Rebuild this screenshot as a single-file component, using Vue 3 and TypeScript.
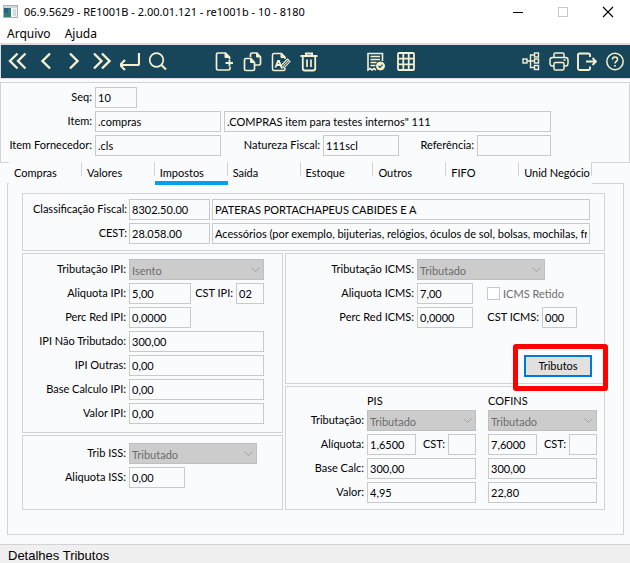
<script setup lang="ts">
import { ref } from 'vue'

interface Field {
  id: string
  label: string
  value: string
  size: string
}

const menus = ['Arquivo', 'Ajuda']
const tabs = ['Compras', 'Valores', 'Impostos', 'Saída', 'Estoque', 'Outros', 'FIFO', 'Unid Negócio']
const activeTab = ref('Impostos')

const classification = ref([
  { id: 'fiscal', label: 'Classificação Fiscal:', code: '8302.50.00', text: 'PATERAS PORTACHAPEUS CABIDES E A' },
  {
    id: 'cest',
    label: 'CEST:',
    code: '28.058.00',
    text: 'Acessórios (por exemplo, bijuterias, relógios, óculos de sol, bolsas, mochilas, frasqueiras)',
  },
])

const ipiFields = ref<Field[]>([
  { id: 'ipi-red', label: 'Perc Red IPI:', value: '0,0000', size: 'w-62' },
  { id: 'ipi-nt', label: 'IPI Não Tributado:', value: '300,00', size: 'w-135' },
  { id: 'ipi-outras', label: 'IPI Outras:', value: '0,00', size: 'w-135' },
  { id: 'ipi-base', label: 'Base Calculo IPI:', value: '0,00', size: 'w-135' },
  { id: 'ipi-valor', label: 'Valor IPI:', value: '0,00', size: 'w-135' },
])

const contributions = ref([
  { id: 'pis', name: 'PIS', type: 'Tributado', rate: '1,6500', cst: '', base: '300,00', value: '4,95' },
  { id: 'cofins', name: 'COFINS', type: 'Tributado', rate: '7,6000', cst: '', base: '300,00', value: '22,80' },
])

const seq = ref('10')
const item = ref('.compras')
const itemName = ref('.COMPRAS item para testes internos" 111')
const supplierItem = ref('.cls')
const nature = ref('111scl')
const reference = ref('')
const ipiRate = ref('5,00')
const ipiCst = ref('02')
const issRate = ref('0,00')
const icmsRate = ref('7,00')
const icmsRed = ref('0,0000')
const icmsCst = ref('000')
const icmsHeld = ref(false)
</script>

<template>
  <div class="window">
    <header class="titlebar">
      <svg class="app-icon" viewBox="0 0 15 13">
        <rect x="0.5" y="0.5" width="14" height="12" fill="#f4f4f4" stroke="#a9b0b6" />
        <rect x="1" y="1" width="13" height="2" fill="#cfd5da" />
        <rect x="1" y="3" width="7" height="9" fill="#2f7f74" />
        <rect x="1" y="3" width="4" height="5" fill="#2b5c8c" />
        <rect x="10" y="4" width="3" height="7" fill="#d6dade" />
      </svg>
      <h1>06.9.5629 - RE1001B - 2.00.01.121 - re1001b - 10 - 8180</h1>
      <div class="window-buttons">
        <button type="button" aria-label="Minimizar">
          <svg viewBox="0 0 12 12"><path d="M1 6.5h10" stroke="#000" /></svg>
        </button>
        <button type="button" aria-label="Maximizar" disabled>
          <svg viewBox="0 0 12 12"><rect x="1.5" y="1.5" width="9" height="9" fill="none" stroke="#c8c8c8" /></svg>
        </button>
        <button type="button" aria-label="Fechar">
          <svg viewBox="0 0 12 12"><path d="M1 1l10 10M11 1L1 11" stroke="#000" stroke-width="1.1" /></svg>
        </button>
      </div>
    </header>

    <nav class="menubar">
      <button v-for="menu in menus" :key="menu" type="button">{{ menu }}</button>
    </nav>

    <div class="toolbar">
      <div class="tools nav-tools">
        <button type="button" aria-label="Primeiro">
          <svg viewBox="0 0 20 20" stroke-width="2.4"><path d="M9.500 1.500L2 9L9.500 16.500M17.500 1.500L10 9L17.500 16.500" /></svg>
        </button>
        <button type="button" aria-label="Anterior">
          <svg viewBox="0 0 20 20" stroke-width="2.4"><path d="M14 1.500L6.500 9L14 16.500" /></svg>
        </button>
        <button type="button" aria-label="Próximo">
          <svg viewBox="0 0 20 20" stroke-width="2.4"><path d="M6 1.500L13.500 9L6 16.500" /></svg>
        </button>
        <button type="button" aria-label="Último">
          <svg viewBox="0 0 20 20" stroke-width="2.4"><path d="M2 1.500L9.500 9L2 16.500M10 1.500L17.500 9L10 16.500" /></svg>
        </button>
        <button type="button" aria-label="Vai para">
          <svg viewBox="0 0 20 20" stroke-width="2.2"><path d="M19 1V11.500q0 1.500-1.500 1.500H0M5 8L0 13L5 18" /></svg>
        </button>
        <button type="button" aria-label="Pesquisar">
          <svg viewBox="0 0 20 20" stroke-width="1.700"><circle cx="8.500" cy="8" r="6.800" /><path d="M13.200 12.700L18 17.500" stroke-width="2" /></svg>
        </button>
      </div>
      <div class="tools edit-tools">
        <button type="button" aria-label="Incluir">
          <svg viewBox="0 0 20 20" stroke-width="1.700">
            <path d="M15 15v1.500q0 1.500-1.500 1.500H3q-1.500 0-1.500-1.500V2.500Q1.500 1 3 1h7.500l4 4V7" />
            <path d="M10 1V5.500h4.500z" fill="currentColor" stroke-width="1" />
            <path d="M10.500 11h7.500M14.500 7.500v7" stroke-width="1.800" />
          </svg>
        </button>
        <button type="button" aria-label="Copiar">
          <svg viewBox="0 0 20 20" stroke-width="1.700">
            <path d="M7.500 5V2.500Q7.500 1 9 1h5l3.500 4v6.500q0 1.500-1.500 1.500h-4" />
            <path d="M13.500 1V5h4z" fill="currentColor" stroke-width="1" />
            <path d="M3 6.500h5l3.500 4v6.500q0 1.500-1.500 1.500H3q-1.500 0-1.500-1.500V8q0-1.500 1.500-1.500z" />
            <path d="M7.500 6.500V10.500h4z" fill="currentColor" stroke-width="1" />
          </svg>
        </button>
        <button type="button" aria-label="Alterar">
          <svg viewBox="0 0 20 20" stroke-width="1.500">
            <path d="M14 16v1q0 1.500-1.500 1.500H3q-1.500 0-1.500-1.500V3q0-1.500 1.500-1.500h7.500l3.500 3.500v2" />
            <path d="M10 1.500V5.500h4z" fill="currentColor" stroke-width="1" />
            <path d="M4.500 15.500L7 9h1l2.500 6.500M5.500 13h4" stroke-width="1.800" />
            <path d="M16.500 7L10.500 13v3l3-.5L19 9.500zM11.500 15L17.500 8.500" stroke-width="1.100" />
          </svg>
        </button>
        <button type="button" aria-label="Eliminar">
          <svg viewBox="0 0 20 20" stroke-width="1.800">
            <path d="M1.500 4h17M7 3.500V1.500h6v2" stroke-width="2" />
            <path d="M3.800 4.500v12q0 2 2 2h8.400q2 0 2-2V4.500" />
            <path d="M8 7.500v7.500M12 7.500v7.500" stroke-width="1.700" />
          </svg>
        </button>
      </div>
      <div class="tools doc-tools">
        <button type="button" aria-label="Relatório">
          <svg viewBox="0 0 20 20" stroke-width="1.600">
            <path d="M16.500 9V1.500H2V18l2-1.500 2 1.500 2-1.500 2 1.500" />
            <path d="M4.500 4.500h9.500M4.500 7.500h9.500M4.500 10.500h6M4.500 13.500h5" />
            <circle cx="14.500" cy="14" r="4" fill="currentColor" stroke-width="1" />
            <path d="M12.500 14l1.500 1.500L16.500 12.700" stroke="#17465a" stroke-width="1.200" />
          </svg>
        </button>
        <button type="button" aria-label="Tabela">
          <svg viewBox="0 0 20 20" stroke-width="1.800">
            <rect x="2" y="1" width="16" height="17" rx="1" />
            <path d="M2 6.700h16M2 12.300h16M7.300 1v17M12.700 1v17" />
          </svg>
        </button>
      </div>
      <div class="tools help-tools">
        <button type="button" aria-label="Estrutura">
          <svg viewBox="0 0 20 20" stroke-width="1.400">
            <rect x="2" y="7" width="4" height="4" />
            <rect x="13.500" y="1" width="4" height="4" />
            <rect x="13.500" y="7" width="4" height="4" />
            <rect x="13.500" y="13.500" width="4" height="4" />
            <path d="M6 9h7.500M13.500 3H9.500v12.500h4" />
          </svg>
        </button>
        <button type="button" aria-label="Imprimir">
          <svg viewBox="0 0 20 20" stroke-width="1.500">
            <path d="M5 5.500V2.500Q5 1 6.500 1h7Q15 1 15 2.500v3" />
            <path d="M5 14H3q-2-.5-2-2.500V8Q1 5.500 3.500 5.500h13Q19 5.500 19 8v3.500q0 2-2 2.500h-2" />
            <rect x="5" y="10.500" width="10" height="7.500" rx="1.500" />
            <path d="M14.500 8h2" />
          </svg>
        </button>
        <button type="button" aria-label="Sair">
          <svg viewBox="0 0 20 20" stroke-width="1.900">
            <path d="M13 5V3q0-1.500-1.500-1.500h-9Q1 1.500 1 3v13.500q0 1.500 1.500 1.500h9q1.500 0 1.500-1.500v-2" />
            <path d="M9 9.500h10M15.500 6L19 9.500l-3.500 3.500" />
          </svg>
        </button>
        <button type="button" aria-label="Ajuda">
          <svg viewBox="0 0 20 20" stroke-width="1.500">
            <circle cx="10" cy="9.500" r="8.200" />
            <path d="M7.500 7.500q0-2.500 2.500-2.500T12.500 7.500q0 1.200-1.300 2T10 11.500" />
            <path d="M10 13v1.500" stroke-width="1.800" />
          </svg>
        </button>
      </div>
    </div>

    <form class="body" @submit.prevent>
      <section class="panel summary">
        <div class="row">
          <label for="seq" class="lead-summary">Seq:</label>
          <input id="seq" v-model="seq" class="w-42" readonly />
        </div>
        <div class="row">
          <label for="item" class="lead-summary">Item:</label>
          <input id="item" v-model="item" class="w-126" readonly />
          <input v-model="itemName" class="grow" aria-label="Descrição do item" readonly />
        </div>
        <div class="row">
          <label for="supplier" class="lead-summary">Item Fornecedor:</label>
          <input id="supplier" v-model="supplierItem" class="w-126" readonly />
          <label for="nature" class="lead-nature">Natureza Fiscal:</label>
          <input id="nature" v-model="nature" class="w-76" readonly />
          <label for="reference" class="push">Referência:</label>
          <input id="reference" v-model="reference" class="w-74" readonly />
        </div>
      </section>

      <div class="tabs" role="tablist">
        <button
          v-for="tab in tabs"
          :key="tab"
          type="button"
          role="tab"
          :aria-selected="tab === activeTab"
          :class="{ active: tab === activeTab }"
          @click="activeTab = tab"
        >
          {{ tab }}
        </button>
      </div>

      <section class="page">
        <div class="panel classification">
          <div v-for="line in classification" :key="line.id" class="row tight">
            <label :for="line.id" class="lead">{{ line.label }}</label>
            <input :id="line.id" v-model="line.code" class="w-81" readonly />
            <input v-model="line.text" class="grow" :aria-label="line.label + ' descrição'" readonly />
          </div>
        </div>

        <div class="columns">
          <div class="column">
            <div class="panel ipi">
              <div class="row">
                <label for="ipi-type" class="lead">Tributação IPI:</label>
                <span class="select w-135">
                  <select id="ipi-type" disabled><option>Isento</option></select>
                  <svg viewBox="0 0 9 5"><path d="M0.500 0.500l4 4 4-4" /></svg>
                </span>
              </div>
              <div class="row">
                <label for="ipi-rate" class="lead">Aliquota IPI:</label>
                <input id="ipi-rate" v-model="ipiRate" class="w-62" readonly />
                <label for="ipi-cst" class="lead-ipi-cst">CST IPI:</label>
                <input id="ipi-cst" v-model="ipiCst" class="w-28" readonly />
              </div>
              <div v-for="field in ipiFields" :key="field.id" class="row">
                <label :for="field.id" class="lead">{{ field.label }}</label>
                <input :id="field.id" v-model="field.value" :class="field.size" readonly />
              </div>
            </div>

            <div class="panel iss">
              <div class="row">
                <label for="iss-type" class="lead">Trib ISS:</label>
                <span class="select w-128">
                  <select id="iss-type" disabled><option>Tributado</option></select>
                  <svg viewBox="0 0 9 5"><path d="M0.500 0.500l4 4 4-4" /></svg>
                </span>
              </div>
              <div class="row">
                <label for="iss-rate" class="lead">Aliquota ISS:</label>
                <input id="iss-rate" v-model="issRate" class="w-56" readonly />
              </div>
            </div>
          </div>

          <div class="column">
            <div class="panel icms">
              <div class="row">
                <label for="icms-type" class="lead-icms">Tributação ICMS:</label>
                <span class="select w-128">
                  <select id="icms-type" disabled><option>Tributado</option></select>
                  <svg viewBox="0 0 9 5"><path d="M0.500 0.500l4 4 4-4" /></svg>
                </span>
              </div>
              <div class="row">
                <label for="icms-rate" class="lead-icms">Aliquota ICMS:</label>
                <input id="icms-rate" v-model="icmsRate" class="w-56" readonly />
                <label class="check"><input v-model="icmsHeld" type="checkbox" disabled />ICMS Retido</label>
              </div>
              <div class="row">
                <label for="icms-red" class="lead-icms">Perc Red ICMS:</label>
                <input id="icms-red" v-model="icmsRed" class="w-56" readonly />
                <label for="icms-cst" class="lead-cst">CST ICMS:</label>
                <input id="icms-cst" v-model="icmsCst" class="w-35" readonly />
              </div>
              <div class="action">
                <div class="highlight"><button type="button" class="primary">Tributos</button></div>
              </div>
            </div>

            <div class="panel contributions">
              <div class="contribution labels">
                <span></span>
                <span class="label">Tributação:</span>
                <span class="label">Alíquota:</span>
                <span class="label">Base Calc:</span>
                <span class="label">Valor:</span>
              </div>
              <div v-for="tax in contributions" :key="tax.id" class="contribution">
                <span class="heading">{{ tax.name }}</span>
                <span class="select">
                  <select :aria-label="tax.name + ' Tributação'" disabled><option>{{ tax.type }}</option></select>
                  <svg viewBox="0 0 9 5"><path d="M0.500 0.500l4 4 4-4" /></svg>
                </span>
                <div class="split">
                  <input v-model="tax.rate" class="w-49" :aria-label="tax.name + ' Alíquota'" readonly />
                  <label :for="tax.id + '-cst'">CST:</label>
                  <input :id="tax.id + '-cst'" v-model="tax.cst" class="w-28" readonly />
                </div>
                <input v-model="tax.base" :aria-label="tax.name + ' Base Calc'" readonly />
                <input v-model="tax.value" :aria-label="tax.name + ' Valor'" readonly />
              </div>
            </div>
          </div>
        </div>
      </section>
    </form>

    <footer class="status">Detalhes Tributos</footer>
  </div>
</template>

<style>
body {
  margin: 0;
}
</style>

<style scoped>
.window,
.window * {
  box-sizing: border-box;
}

.window {
  display: flex;
  flex-direction: column;
  min-height: 100vh;
  background: #fff;
  color: #000;
  font: 11px/21px Lato, 'Noto Sans', sans-serif;
}

button,
input,
select {
  margin: 0;
  font: inherit;
  color: inherit;
}

button {
  padding: 0;
  border: 0;
  background: none;
}

.titlebar {
  display: flex;
  align-items: center;
  height: 23px;
  padding-left: 3px;
}

.app-icon {
  width: 15px;
  height: 13px;
}

h1 {
  flex: 1;
  margin: 0 0 0 6px;
  font-family: 'Noto Sans', sans-serif;
  font-size: 11px;
  font-weight: 400;
  line-height: 22px;
  white-space: nowrap;
}

.window-buttons {
  display: flex;
}

.window-buttons button {
  display: grid;
  place-items: center;
  width: 45px;
  height: 22px;
}

.window-buttons svg {
  width: 12px;
  height: 12px;
}

.menubar {
  display: flex;
  gap: 14px;
  height: 20px;
  padding-left: 7px;
  font-family: 'Noto Sans', sans-serif;
  font-size: 12px;
  line-height: 22px;
}

.toolbar {
  display: flex;
  align-items: center;
  height: 36px;
  padding: 0 5px 0 7px;
  border: solid #dcdcdc;
  border-width: 2px 0 1px 1px;
  background: #17465a;
  color: #f5f0d0;
}

.tools {
  display: flex;
  gap: 8px;
}

.edit-tools,
.doc-tools {
  margin-left: 47px;
}

.doc-tools {
  gap: 10px;
}

.help-tools {
  margin-left: auto;
}

.tools button {
  display: grid;
  height: 20px;
}

.tools svg {
  width: 20px;
  height: 20px;
  fill: none;
  stroke: currentColor;
}

.body {
  display: flex;
  flex: 1;
  flex-direction: column;
  padding: 3px 0 9px;
  background: #fafbfd;
}

.panel {
  border: 1px solid #d2d3d5;
}

.row {
  display: flex;
  gap: 3px;
  height: 21px;
}

.row.tight {
  gap: 2px;
}

.summary,
.classification,
.ipi,
.iss,
.icms {
  display: flex;
  flex-direction: column;
  gap: 3px;
}

.summary {
  padding: 4px 78px 6px 0;
}

label,
.label {
  line-height: 20px;
  white-space: nowrap;
}

.lead-summary,
.lead-nature,
.lead,
.lead-ipi-cst,
.lead-icms,
.lead-cst,
.label {
  text-align: right;
}

.lead-summary {
  width: 91px;
}

.lead-nature {
  width: 96px;
}

.lead {
  width: 103px;
}

.lead-ipi-cst {
  width: 39px;
}

.row.tight .lead {
  width: 104px;
}

.lead-icms {
  width: 128px;
}

.lead-cst {
  width: 63px;
}

.push {
  margin-left: auto;
}

input,
select {
  min-width: 0;
  height: 21px;
  padding: 0 2px;
  border: 1px solid #c8c9cb;
  border-radius: 0;
  background: #fafbfd;
  outline: 0;
}

.grow {
  flex: 1;
}

.w-28 { width: 28px; }
.w-35 { width: 35px; }
.w-42 { width: 42px; }
.w-49 { width: 49px; }
.w-56 { width: 56px; }
.w-62 { width: 62px; }
.w-74 { width: 74px; }
.w-76 { width: 76px; }
.w-81 { width: 81px; }
.w-126 { width: 126px; }
.w-128 { width: 128px; }
.w-135 { width: 135px; }

.select {
  display: grid;
  align-items: center;
}

.select > * {
  grid-area: 1 / 1;
}

.select select {
  width: 100%;
  appearance: none;
  border-color: #bfbfbf;
  background: #ccc;
  color: #6d6d6d;
  opacity: 1;
}

.select svg {
  justify-self: end;
  width: 9px;
  height: 5px;
  margin-right: 4px;
  fill: none;
  stroke: #a0a0a0;
}

.tabs {
  display: grid;
  grid-template-columns: repeat(8, 1fr);
  height: 23px;
  margin: -1px 38px 0 9px;
  background: #fafbfd;
  z-index: 1;
}

.tabs button {
  overflow: hidden;
  padding: 0 4px 0 5px;
  border-bottom: 4px solid transparent;
  background: linear-gradient(#d2d3d5, #d2d3d5) right top / 1px 14px no-repeat;
  line-height: 22px;
  text-align: left;
  white-space: nowrap;
}

.tabs button.active {
  border-bottom-color: #00a2e8;
}

.page {
  display: flex;
  flex: 1;
  flex-direction: column;
  gap: 2px;
  margin: -2px 6px 0 7px;
  padding: 9px 18px 24px 14px;
  border: 1px solid #d2d3d5;
}

.classification {
  padding: 5px 14px 6px 0;
}

.columns {
  display: grid;
  flex: 1;
  grid-template-columns: 261px 1fr;
  gap: 2px;
}

.column {
  display: flex;
  flex-direction: column;
  gap: 2px;
}

.ipi {
  padding: 5px 0 8px;
}

.iss {
  flex: 1;
  padding-top: 7px;
}

.icms {
  padding: 5px 0 0;
}

.check {
  display: flex;
  align-items: center;
  gap: 3px;
  margin-left: 11px;
  color: #6d6d6d;
}

.check input {
  width: 13px;
  height: 13px;
  appearance: none;
  background: #fff;
}

.action {
  display: flex;
  justify-content: flex-end;
  height: 52px;
  padding-top: 13px;
}

.highlight {
  z-index: 1;
  width: 95px;
  height: 47px;
  margin-right: -4px;
  padding: 6px;
  border: 5px solid #f00;
  border-radius: 3px;
}

.primary {
  width: 68px;
  height: 22px;
  border: 2px solid #0078d7;
  background: #e1e1e1;
  line-height: 18px;
}

.contributions {
  display: grid;
  flex: 1;
  grid-template-columns: 69px 1fr 1fr;
  gap: 12px;
  padding: 3px 7px 0 0;
}

.contribution {
  display: grid;
  grid-template-rows: 17px;
  grid-auto-rows: 21px;
  row-gap: 3px;
  align-content: start;
  min-width: 0;
}

.contribution.labels {
  margin-right: -9px;
}

.split {
  display: flex;
  gap: 3px;
}

.split label {
  margin-left: auto;
}

.status {
  height: 19px;
  padding-left: 8px;
  border-top: 1px solid #d2d3d5;
  background: #f0f0f0;
  font-family: 'Liberation Sans', sans-serif;
  font-size: 13px;
  line-height: 22px;
}
</style>
